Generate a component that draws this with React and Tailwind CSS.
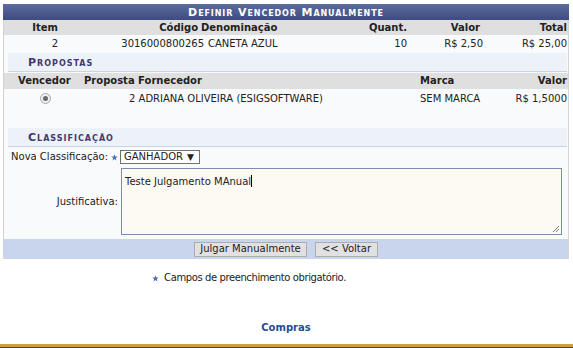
import React from "react";

const Star = ({ className = "" }) => (
  <svg width="7" height="7" viewBox="0 0 10 10" className={className}>
    <path d="M5 0.3 L6.2 3.6 L9.7 3.7 L6.9 5.8 L7.9 9.3 L5 7.2 L2.1 9.3 L3.1 5.8 L0.3 3.7 L3.8 3.6 Z" fill="#4a6fc2" />
  </svg>
);

export default function App() {
  return (
    <div
      className="w-[573px] h-[348px] bg-white relative overflow-hidden text-[10px] text-[#222] leading-none"
      style={{ fontFamily: '"DejaVu Sans", Verdana, sans-serif' }}
    >
      <div className="pt-[4px] ml-[3px] w-[566px]">
        {/* title bar */}
        <div className="h-[16px] bg-gradient-to-b from-[#5d6c9e] to-[#3d4b80] flex items-center justify-center text-white font-bold text-[11px] [font-variant:small-caps] tracking-[0.9px]">
          Definir Vencedor Manualmente
        </div>
        <div className="bg-[#f9fafc] border-l border-r border-[#d3d3d3]">
          {/* items header */}
          <div className="h-[15px] bg-[#dfdfe0] flex items-center font-bold">
            <div className="w-[54px] text-right">Item</div>
            <div className="w-[140px] text-right">Código</div>
            <div className="flex-1 pl-[3px]">Denominação</div>
            <div className="w-[50px] text-right">Quant.</div>
            <div className="w-[73px] text-right">Valor</div>
            <div className="w-[87px] text-right">Total</div>
            <div className="w-[1px]" />
          </div>
          <div className="h-[18px] flex items-center">
            <div className="w-[54px] text-right">2</div>
            <div className="w-[146px] text-right">3016000800265</div>
            <div className="flex-1 pl-[4px]">CANETA AZUL</div>
            <div className="w-[50px] text-right">10</div>
            <div className="w-[76px] text-right">R$ 2,50</div>
            <div className="w-[84px] text-right">R$ 25,00</div>
            <div className="w-[1px]" />
          </div>
          {/* propostas band */}
          <div className="ml-[4px] mr-[1px] h-[19px] bg-[#edf1f8] border-b border-[#c6d3ea] flex items-center pl-[20px] font-bold text-[#3f3a6e] text-[11px] [font-variant:small-caps] tracking-[1px]">
            Propostas
          </div>
          <div className="h-[1px]" />
          <div className="h-[16px] bg-[#dfdfe0] flex items-center font-bold">
            <div className="w-[14px]" />
            <div className="w-[66px]">Vencedor</div>
            <div className="w-[336px]">Proposta Fornecedor</div>
            <div className="flex-1">Marca</div>
            <div className="w-[60px] text-right">Valor</div>
            <div className="w-[1px]" />
          </div>
          <div className="h-[19px] flex items-center">
            <div className="w-[36px]" />
            <div className="w-[11px] h-[11px] rounded-full border border-[#a8a8a8] bg-[#f0f0f0] flex items-center justify-center">
              <div className="w-[5px] h-[5px] rounded-full bg-[#6a6a6a]" />
            </div>
            <div className="w-[78px]" />
            <div className="w-[291px]">2 ADRIANA OLIVEIRA (ESIGSOFTWARE)</div>
            <div className="flex-1">SEM MARCA</div>
            <div className="w-[70px] text-right">R$ 1,5000</div>
            <div className="w-[1px]" />
          </div>
          <div className="h-[20px]" />
          {/* classificacao band */}
          <div className="ml-[4px] mr-[1px] h-[19px] bg-[#edf1f8] border-b border-[#c6d3ea] flex items-center pl-[20px] font-bold text-[#3f3a6e] text-[11px] [font-variant:small-caps] tracking-[1px]">
            Classificação
          </div>
          <div className="h-[3px]" />
          <div className="h-[14px] flex items-center">
            <div className="w-[104px] text-right">Nova Classificação:</div>
            <div className="w-[12px] flex justify-center">
              <Star />
            </div>
            <div className="w-[80px] h-[14px] border border-[#707070] bg-white flex items-center pl-[3px] gap-[4px]">
              <span>GANHADOR</span>
              <span className="text-[9px]">▼</span>
            </div>
          </div>
          <div className="h-[4px]" />
          <div className="flex items-center pb-[2px]">
            <div className="w-[114px] text-right">Justificativa:</div>
            <div className="w-[3px]" />
            <div className="w-[441px] h-[67px] border border-[#7b8db0] bg-[#fdf9f3] relative pl-[3px] pt-[6px]">
              <span>Teste Julgamento MAnual</span>
              <span className="inline-block w-[1px] h-[12px] bg-black align-[-2px]" />
              <svg width="8" height="8" viewBox="0 0 8 8" className="absolute right-[1px] bottom-[1px]">
                <path d="M7 1 L1 7 M7 4 L4 7" stroke="#777" strokeWidth="1" />
              </svg>
            </div>
          </div>
          <div className="h-[2px]" />
          {/* button bar */}
          <div className="h-[20px] bg-[#c8d5ec] flex items-center justify-center gap-[8px]">
            <div className="w-[113px] h-[15px] bg-[#e1e1e1] border border-[#adadad] flex items-center justify-center">
              Julgar Manualmente
            </div>
            <div className="w-[63px] h-[15px] bg-[#e1e1e1] border border-[#adadad] flex items-center justify-center">
              &lt;&lt; Voltar
            </div>
          </div>
        </div>
        <div className="h-[13px]" />
        <div className="flex items-center justify-center gap-[5px] pr-[74px] h-[12px]">
          <Star />
          <span className="tracking-[-0.4px]">Campos de preenchimento obrigatório.</span>
        </div>
        <div className="h-[38px]" />
        <div className="flex justify-center h-[12px] items-center font-bold text-[#1f4e93]">Compras</div>
      </div>
      <div className="absolute left-0 right-0 bottom-0">
        <div className="h-[3px] bg-[#d59b43]" />
        <div className="h-[1px] bg-[#3b4a6b]" />
      </div>
    </div>
  );
}
